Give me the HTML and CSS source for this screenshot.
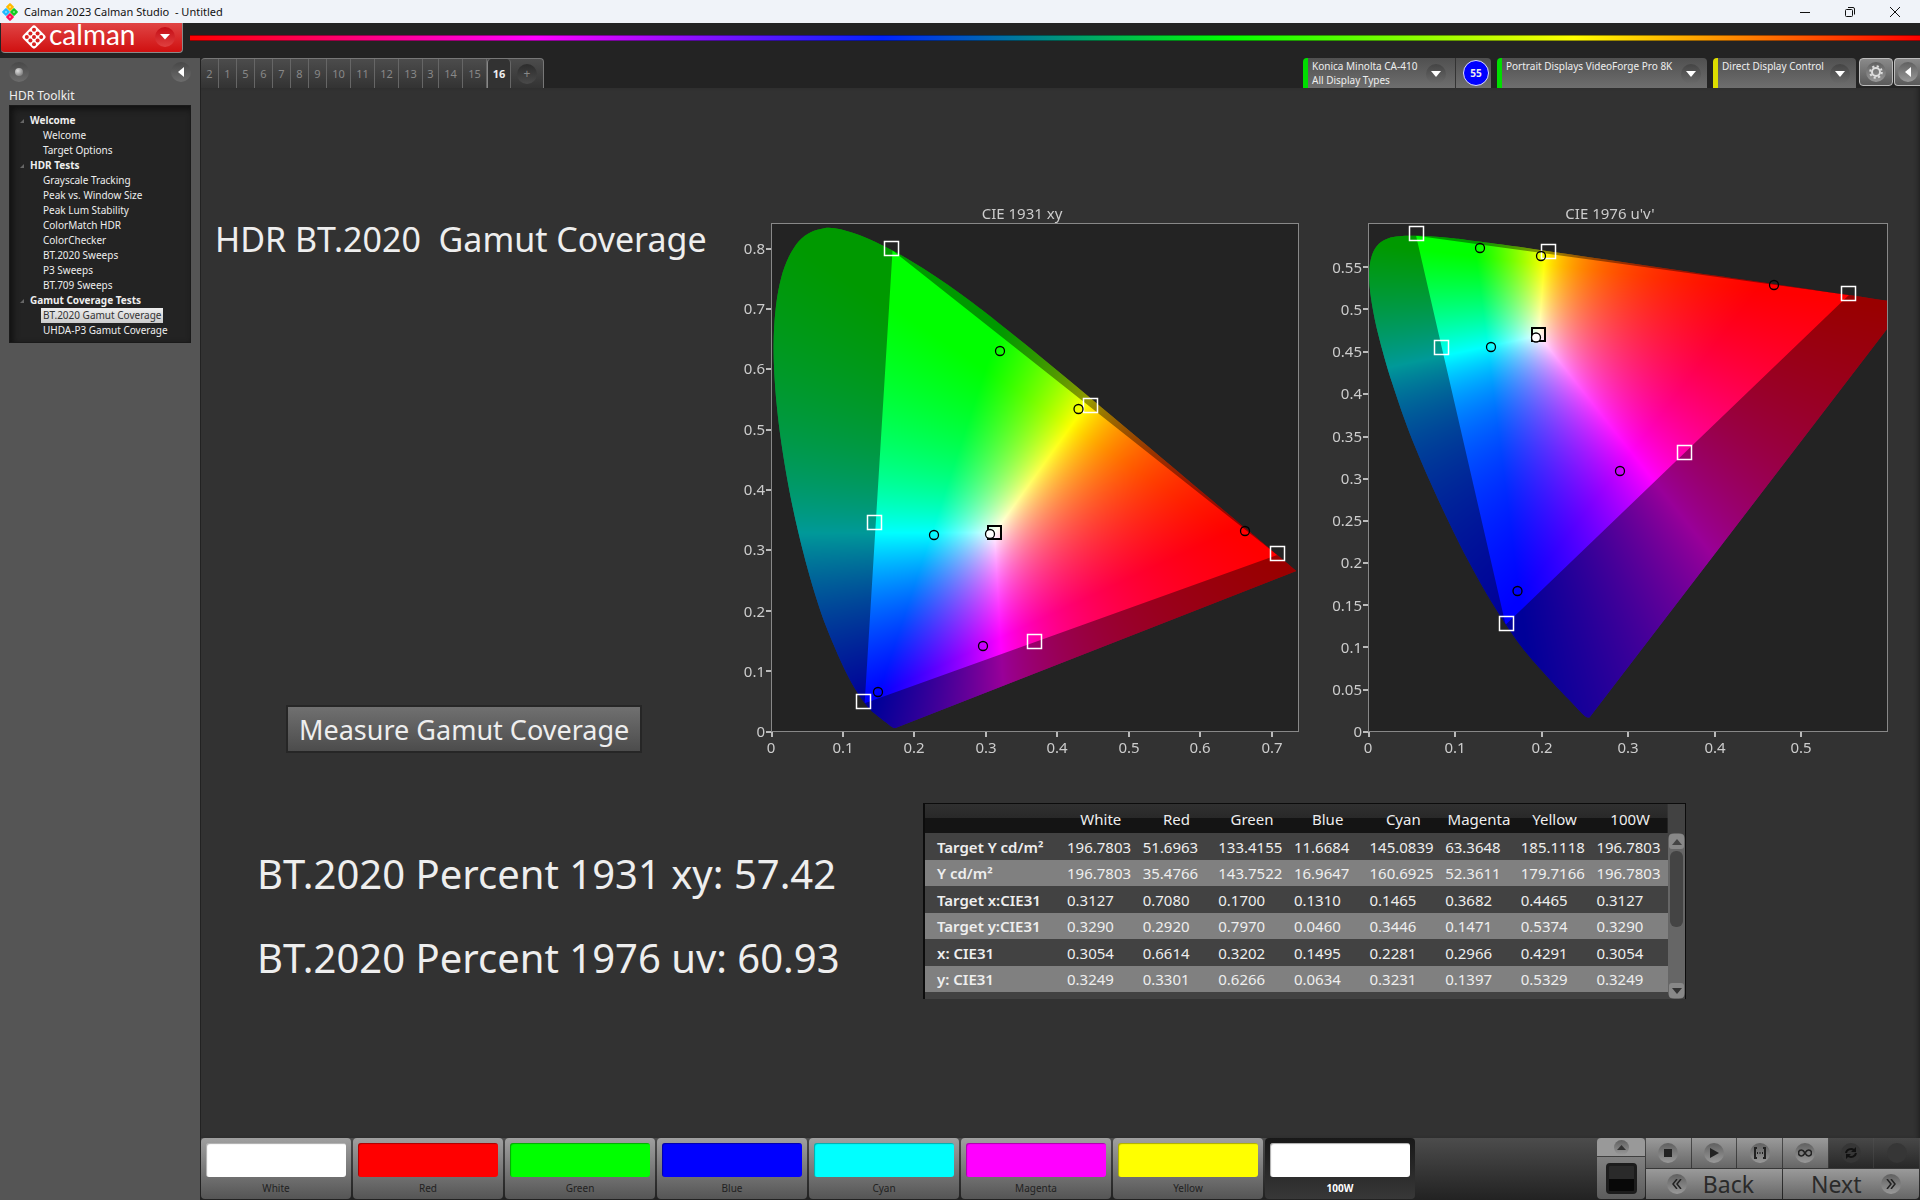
FILE: index.html
```html
<!DOCTYPE html>
<html lang="en">
<head>
<meta charset="utf-8">
<title>Calman 2023 Calman Studio - Untitled</title>
<link rel="stylesheet" href="styles.css">
</head>
<body>
<div class="app">
  <header class="titlebar">
    <svg class="app-icon" width="16" height="18" viewBox="0 0 16 18" aria-hidden="true">
      <rect x="5" y="1" width="6" height="6" rx="1" fill="#fb0" transform="rotate(45 8 4)"/>
      <rect x="1" y="6" width="6" height="6" rx="1" fill="#2bf" transform="rotate(45 4 9)"/>
      <rect x="9" y="6" width="6" height="6" rx="1" fill="#1c2" transform="rotate(45 12 9)"/>
      <rect x="5" y="11" width="6" height="6" rx="1" fill="#f15" transform="rotate(45 8 14)"/>
      <g fill="#fff" opacity=".5"><circle cx="8" cy="4" r="1"/><circle cx="4" cy="9" r="1"/><circle cx="12" cy="9" r="1"/><circle cx="8" cy="14" r="1"/></g>
    </svg>
    <h1 class="window-title">Calman 2023 Calman Studio &nbsp;- Untitled</h1>
    <div class="window-buttons">
      <button class="win-btn" aria-label="Minimize"><svg width="12" height="12" viewBox="0 0 12 12"><path d="M1 6.5h10" stroke="#111"/></svg></button>
      <button class="win-btn" aria-label="Restore"><svg width="12" height="12" viewBox="0 0 12 12" fill="none" stroke="#111"><rect x="1.500" y="3.500" width="7" height="7" rx="1"/><path d="M4 1.500h5q1.500 0 1.500 1.500v5.500"/></svg></button>
      <button class="win-btn" aria-label="Close"><svg width="12" height="12" viewBox="0 0 12 12"><path d="M1 1l10 10M11 1L1 11" stroke="#111"/></svg></button>
    </div>
  </header>

  <div class="brandbar">
    <button class="brand">
      <svg width="24" height="24" viewBox="0 0 24 24" aria-hidden="true">
        <rect x="3" y="3" width="18" height="18" rx="3" fill="#fff" transform="rotate(45 12 12)"/>
        <g fill="#d8201f"><circle cx="12" cy="4.800" r="2"/><circle cx="8.400" cy="8.400" r="2"/><circle cx="15.600" cy="8.400" r="2"/><circle cx="4.800" cy="12" r="2"/><circle cx="12" cy="12" r="2"/><circle cx="19.200" cy="12" r="2"/><circle cx="8.400" cy="15.600" r="2"/><circle cx="15.600" cy="15.600" r="2"/><circle cx="12" cy="19.200" r="2"/></g>
      </svg>
      <span class="brand-name">calman</span>
      <span class="brand-menu"><svg width="10" height="6" viewBox="0 0 10 6"><path d="M0 0h10L5 5.500z" fill="#fff"/></svg></span>
    </button>
    <div class="spectrum"></div>
  </div>

  <div class="body">
    <aside class="sidebar">
      <div class="side-tools">
        <button class="round-btn" aria-label="Record"><span class="led"></span></button>
        <button class="round-btn" aria-label="Collapse"><svg width="6" height="10" viewBox="0 0 6 10"><path d="M6 0v10L0 5z" fill="#fff"/></svg></button>
      </div>
      <h2 class="side-title">HDR Toolkit</h2>
      <nav class="tree">
        <h3>Welcome</h3>
        <a href="#">Welcome</a>
        <a href="#">Target Options</a>
        <h3>HDR Tests</h3>
        <a href="#">Grayscale Tracking</a>
        <a href="#">Peak vs. Window Size</a>
        <a href="#">Peak Lum Stability</a>
        <a href="#">ColorMatch HDR</a>
        <a href="#">ColorChecker</a>
        <a href="#">BT.2020 Sweeps</a>
        <a href="#">P3 Sweeps</a>
        <a href="#">BT.709 Sweeps</a>
        <h3>Gamut Coverage Tests</h3>
        <a href="#" class="current" aria-current="page">BT.2020 Gamut Coverage</a>
        <a href="#">UHDA-P3 Gamut Coverage</a>
      </nav>
    </aside>

    <main class="main">
      <div class="topstrip">
        <div class="tabs">
          <button>2</button><button>1</button><button>5</button><button>6</button><button>7</button><button>8</button><button>9</button><button class="wide">10</button><button class="wide">11</button><button class="wide">12</button><button class="wide">13</button><button class="narrow">3</button><button class="wide">14</button><button class="wide">15</button><button class="wide active">16</button><button class="add" aria-label="Add page"><span>+</span></button>
        </div>
        <div class="devices">
          <div class="device meter">
            <button class="device-pick"><span>Konica Minolta CA-410<br>All Display Types</span><i class="drop"><svg width="10" height="6" viewBox="0 0 10 6"><path d="M0 0h10L5 6z" fill="#fff"/></svg></i></button>
            <span class="badge">55</span>
          </div>
          <div class="device source">
            <button class="device-pick"><span>Portrait Displays VideoForge Pro 8K</span><i class="drop"><svg width="10" height="6" viewBox="0 0 10 6"><path d="M0 0h10L5 6z" fill="#fff"/></svg></i></button>
          </div>
          <div class="device display">
            <button class="device-pick"><span>Direct Display Control</span><i class="drop"><svg width="10" height="6" viewBox="0 0 10 6"><path d="M0 0h10L5 6z" fill="#fff"/></svg></i></button>
          </div>
          <button class="tool-btn" aria-label="Settings"><i class="disc"><svg width="14" height="14" viewBox="0 0 14 14" fill="none" stroke="#ddd"><circle cx="7" cy="7" r="4" stroke-width="2"/><circle cx="7" cy="7" r="5.800" stroke-width="2" stroke-dasharray="2.200 2.350"/></svg></i></button>
          <button class="tool-btn last" aria-label="Expand"><i class="disc"><svg width="6" height="10" viewBox="0 0 6 10"><path d="M6 0v10L0 5z" fill="#fff"/></svg></i></button>
        </div>
      </div>

      <div class="workspace">
        <section class="top-row">
          <div class="intro">
            <h2 class="page-title">HDR BT.2020&nbsp; Gamut Coverage</h2>
            <button class="measure">Measure Gamut Coverage</button>
          </div>
          <div class="charts">
            <figure class="chart">
              <canvas id="cie1931" width="570" height="560"></canvas>
              <svg viewBox="0 0 570 560" role="img" aria-label="CIE 1931 xy">
                <text class="title" x="282" y="19">CIE 1931 xy</text>
                <rect class="frame" x="31.500" y="23.500" width="527" height="508"/>
                <path class="ticks" d="M26 532h5M26 471h5M26 411h5M26 350h5M26 290h5M26 230h5M26 169h5M26 109h5M26 49h5M32 532v5M103 532v5M174 532v5M246 532v5M317 532v5M389 532v5M460 532v5M532 532v5"/>
                <g class="ylab"><text x="25" y="537">0</text><text x="25" y="477">0.1</text><text x="25" y="417">0.2</text><text x="25" y="355">0.3</text><text x="25" y="295">0.4</text><text x="25" y="235">0.5</text><text x="25" y="174">0.6</text><text x="25" y="114">0.7</text><text x="25" y="54">0.8</text></g>
                <g class="xlab"><text x="31" y="553">0</text><text x="103" y="553">0.1</text><text x="174" y="553">0.2</text><text x="246" y="553">0.3</text><text x="317" y="553">0.4</text><text x="389" y="553">0.5</text><text x="460" y="553">0.6</text><text x="532" y="553">0.7</text></g>
                <g class="targets">
                  <rect x="144.500" y="41.500" width="14" height="14"/><rect x="343.500" y="198.500" width="14" height="14"/><rect x="127.500" y="315.500" width="14" height="14"/><rect x="287.500" y="434.500" width="14" height="14"/><rect x="116.500" y="494.500" width="14" height="14"/><rect x="530.500" y="346.500" width="14" height="14"/>
                  <rect class="white-point" x="248" y="326" width="13" height="13"/>
                </g>
                <g class="readings">
                  <circle cx="260" cy="151" r="4.500"/><circle cx="338.500" cy="209" r="4.500"/><circle cx="194" cy="335" r="4.500"/><circle cx="505" cy="331" r="4.500"/><circle cx="243" cy="446" r="4.500"/><circle cx="138" cy="492" r="4.500"/><circle class="white-read" cx="250" cy="334" r="4.500"/>
                </g>
              </svg>
            </figure>
            <figure class="chart">
              <canvas id="cie1976" width="570" height="560"></canvas>
              <svg viewBox="0 0 570 560" role="img" aria-label="CIE 1976 u'v'">
                <text class="title" x="280" y="19">CIE 1976 u'v'</text>
                <rect class="frame" x="38.500" y="23.500" width="519" height="508"/>
                <path class="ticks" d="M33 532h5M33 490h5M33 447h5M33 405h5M33 363h5M33 321h5M33 279h5M33 237h5M33 194h5M33 152h5M33 109h5M33 67h5M39 532v5M125 532v5M212 532v5M298 532v5M385 532v5M471 532v5"/>
                <g class="ylab"><text x="32" y="537">0</text><text x="32" y="495">0.05</text><text x="32" y="453">0.1</text><text x="32" y="411">0.15</text><text x="32" y="368">0.2</text><text x="32" y="326">0.25</text><text x="32" y="284">0.3</text><text x="32" y="242">0.35</text><text x="32" y="199">0.4</text><text x="32" y="157">0.45</text><text x="32" y="115">0.5</text><text x="32" y="73">0.55</text></g>
                <g class="xlab"><text x="38" y="553">0</text><text x="125" y="553">0.1</text><text x="212" y="553">0.2</text><text x="298" y="553">0.3</text><text x="385" y="553">0.4</text><text x="471" y="553">0.5</text></g>
                <g class="targets">
                  <rect x="79.500" y="26.500" width="14" height="14"/><rect x="211.500" y="44.500" width="14" height="14"/><rect x="104.500" y="140.500" width="14" height="14"/><rect x="347.500" y="245.500" width="14" height="14"/><rect x="169.500" y="416.500" width="14" height="14"/><rect x="511.500" y="86.500" width="14" height="14"/>
                  <rect class="white-point" x="202" y="128" width="13" height="13"/>
                </g>
                <g class="readings">
                  <circle cx="150" cy="48" r="4.500"/><circle cx="211" cy="56" r="4.500"/><circle cx="161" cy="147" r="4.500"/><circle cx="444" cy="85" r="4.500"/><circle cx="290" cy="271" r="4.500"/><circle cx="187.500" cy="391" r="4.500"/><circle class="white-read" cx="206" cy="137.500" r="4.500"/>
                </g>
              </svg>
            </figure>
          </div>
        </section>

        <section class="bottom-row">
          <div class="results">
            <p>BT.2020 Percent 1931 xy: 57.42</p>
            <p>BT.2020 Percent 1976 uv: 60.93</p>
          </div>
          <div class="grid">
            <div class="grid-view">
              <table>
                <thead><tr><th class="name"></th><th>White</th><th>Red</th><th>Green</th><th>Blue</th><th>Cyan</th><th>Magenta</th><th>Yellow</th><th>100W</th></tr></thead>
                <tbody>
                  <tr><th>Target Y cd/m²</th><td>196.7803</td><td>51.6963</td><td>133.4155</td><td>11.6684</td><td>145.0839</td><td>63.3648</td><td>185.1118</td><td>196.7803</td></tr>
                  <tr><th>Y cd/m²</th><td>196.7803</td><td>35.4766</td><td>143.7522</td><td>16.9647</td><td>160.6925</td><td>52.3611</td><td>179.7166</td><td>196.7803</td></tr>
                  <tr><th>Target x:CIE31</th><td>0.3127</td><td>0.7080</td><td>0.1700</td><td>0.1310</td><td>0.1465</td><td>0.3682</td><td>0.4465</td><td>0.3127</td></tr>
                  <tr><th>Target y:CIE31</th><td>0.3290</td><td>0.2920</td><td>0.7970</td><td>0.0460</td><td>0.3446</td><td>0.1471</td><td>0.5374</td><td>0.3290</td></tr>
                  <tr><th>x: CIE31</th><td>0.3054</td><td>0.6614</td><td>0.3202</td><td>0.1495</td><td>0.2281</td><td>0.2966</td><td>0.4291</td><td>0.3054</td></tr>
                  <tr><th>y: CIE31</th><td>0.3249</td><td>0.3301</td><td>0.6266</td><td>0.0634</td><td>0.3231</td><td>0.1397</td><td>0.5329</td><td>0.3249</td></tr>
                </tbody>
              </table>
            </div>
            <div class="scrollbar">
              <button aria-label="Scroll up"><svg width="10" height="6" viewBox="0 0 10 6"><path d="M0 6h10L5 0z" fill="#444"/></svg></button>
              <div class="thumb"></div>
              <button aria-label="Scroll down"><svg width="10" height="6" viewBox="0 0 10 6"><path d="M0 0h10L5 6z" fill="#333"/></svg></button>
            </div>
          </div>
        </section>
      </div>

      <footer class="footer">
        <div class="swatches">
          <button><span class="chip white"></span>White</button>
          <button><span class="chip red"></span>Red</button>
          <button><span class="chip green"></span>Green</button>
          <button><span class="chip blue"></span>Blue</button>
          <button><span class="chip cyan"></span>Cyan</button>
          <button><span class="chip magenta"></span>Magenta</button>
          <button><span class="chip yellow"></span>Yellow</button>
          <button class="selected"><span class="chip white"></span>100W</button>
        </div>
        <div class="transport">
          <div class="pattern">
            <button class="up" aria-label="Show patterns"><i class="disc small"><svg width="9" height="5" viewBox="0 0 9 5"><path d="M0 5h9L4.500 0z" fill="#333"/></svg></i></button>
            <button class="screen" aria-label="Pattern window"><span></span></button>
          </div>
          <div class="controls">
            <button aria-label="Stop"><i class="disc"><svg width="8" height="8" viewBox="0 0 8 8"><path d="M0 0h8v8H0z" fill="#222"/></svg></i></button>
            <button aria-label="Play"><i class="disc"><svg width="10" height="10" viewBox="0 0 10 10"><path d="M1 0l9 5-9 5z" fill="#222"/></svg></i></button>
            <button aria-label="Read series"><i class="disc"><svg width="14" height="12" viewBox="0 0 14 12" fill="none" stroke="#222" stroke-width="2"><path d="M4 1H2v10h2M10 1h2v10h-2M4 6h1M6.500 6h1M9 6h1"/></svg></i></button>
            <button aria-label="Read continuous"><i class="disc"><svg width="14" height="8" viewBox="0 0 14 8" fill="none" stroke="#222" stroke-width="1.500"><path d="M7 4C5.500 1.500 4.500 1 3.500 1a3 3 0 0 0 0 6C4.500 7 5.500 6.500 7 4s2.500-3 3.500-3a3 3 0 0 1 0 6C9.500 7 8.500 6.500 7 4z"/></svg></i></button>
            <button class="off" aria-label="Refresh"><i class="disc"><svg width="12" height="12" viewBox="0 0 12 12" fill="none" stroke="#111" stroke-width="2"><path d="M1 6a5 4.500 0 0 1 8-3M11 6a5 4.500 0 0 1-8 3"/><path d="M11 0v5H6zM1 12V7h5z" fill="#111" stroke="none"/></svg></i></button>
            <button class="off" aria-label="Blank"><i class="disc"></i></button>
            <button class="nav"><i class="disc"><svg width="10" height="10" viewBox="0 0 10 10" fill="none" stroke="#222" stroke-width="1.500"><path d="M5 0L1 5l4 5M9 0L5 5l4 5"/></svg></i>Back</button>
            <button class="nav next">Next<i class="disc"><svg width="10" height="10" viewBox="0 0 10 10" fill="none" stroke="#222" stroke-width="1.500"><path d="M1 0l4 5-4 5M5 0l4 5-4 5"/></svg></i></button>
          </div>
        </div>
      </footer>
    </main>
  </div>
</div>
<script src="gamut.js"></script>
</body>
</html>
```
FILE: styles.css
```css
* { box-sizing: border-box; }

body {
  margin: 0;
  background: #232323;
  color: #eee;
  font-family: "Noto Sans", "Open Sans", sans-serif;
  font-size: 10px;
}

h1, h2, h3, p, figure { margin: 0; font-weight: 400; }

button {
  margin: 0;
  padding: 0;
  border: 0;
  background: none;
  color: inherit;
  font: inherit;
}

svg { display: block; }

.app {
  display: flex;
  flex-direction: column;
  min-height: 100vh;
}

/* Window frame */
.titlebar {
  display: flex;
  align-items: center;
  height: 23px;
  padding: 0 3px 0 2px;
  background: #f0f3f9;
  color: #111;
}
.window-title {
  flex: 1;
  margin-left: 6px;
  font-size: 11px;
}
.window-buttons { display: flex; height: 20px; }
.win-btn { display: grid; place-items: center; width: 45px; }

.brandbar {
  display: flex;
  align-items: flex-start;
  gap: 7px;
  height: 35px;
  padding-left: 1px;
}
.brand {
  display: flex;
  align-items: center;
  width: 182px;
  height: 30px;
  padding: 0 7px 2px 21px;
  border: solid #8a8a8a;
  border-width: 0 1px 1px 0;
  border-radius: 0 0 4px 4px;
  background: linear-gradient(#e04545, #d01010);
  color: #fff;
}
.brand-name {
  flex: 1;
  height: 28px;
  padding-left: 3px;
  font: 28px/22px "Lato", sans-serif;
  text-align: left;
}
.brand-menu {
  display: grid;
  place-items: center;
  width: 20px;
  height: 20px;
  border-radius: 50%;
  background: linear-gradient(#c40c14, #e04040);
}
.spectrum {
  flex: 1;
  height: 6px;
  margin-top: 12px;
  border: solid #0006;
  border-width: 1px 0;
  background: linear-gradient(90deg, #f00, #f0f, #02f, #0f0, #ff0, #f00);
  background-origin: border-box;
}

.body { display: flex; flex: 1; }

/* Sidebar */
.sidebar {
  flex: none;
  width: 200px;
  background: #555;
}
.side-tools {
  display: flex;
  justify-content: space-between;
  padding: 4px 9px 0;
}
.round-btn {
  display: grid;
  place-items: center;
  width: 20px;
  height: 20px;
  border-radius: 50%;
  background: linear-gradient(#484848, #6c6c6c);
}
.led {
  width: 8px;
  height: 8px;
  border-radius: 50%;
  background: radial-gradient(circle at 35% 35%, #ddd, #888 70%);
}
.side-title {
  padding: 6px 9px 0;
  font-size: 12px;
  line-height: 16px;
}
.tree {
  margin: 1px 9px 0;
  height: 238px;
  padding: 7px 0 0 20px;
  border: 1px solid #1a1a1a;
  background: #232323;
  box-shadow: inset 3px 3px 6px #111;
  line-height: 15px;
}
.tree h3 {
  position: relative;
  font-size: 10px;
  font-weight: 700;
}
.tree h3::before {
  content: "";
  position: absolute;
  left: -10px;
  top: 6px;
  border: solid transparent;
  border-width: 0 0 4px 4px;
  border-bottom-color: #666;
}
.tree a {
  display: block;
  width: max-content;
  margin-left: 11px;
  padding: 0 2px;
  color: #eee;
  text-decoration: none;
}
.tree .current {
  background: linear-gradient(#eee, #ccc);
  color: #333;
}

/* Tab strip and devices */
.main {
  display: flex;
  flex: 1;
  flex-direction: column;
  min-width: 0;
  border-left: 1px solid #222;
  background: #323232;
}
.topstrip {
  display: flex;
  justify-content: space-between;
  height: 30px;
  background: #232323;
}
.tabs {
  display: flex;
  border: solid #777;
  border-width: 1px 1px 0 0;
  border-radius: 4px 4px 0 0;
  background: linear-gradient(#4c4c4c, #333);
  color: #888;
  font-size: 11px;
}
.tabs button {
  width: 18px;
  border-right: 1px solid #666;
}
.tabs .wide { width: 24px; }
.tabs .narrow { width: 16px; }
.tabs .active {
  border-left: 1px solid #888;
  border-radius: 4px 4px 0 0;
  background: #323232;
  color: #eee;
  font-weight: 700;
}
.tabs .add { display: grid; place-items: center; width: 32px; border: 0; }
.tabs .add span {
  width: 20px;
  height: 20px;
  border-radius: 50%;
  background: linear-gradient(#2c2c2c, #4a4a4a);
  font-size: 12px;
  line-height: 20px;
}

.devices { display: flex; align-items: flex-start; }
.device {
  display: flex;
  height: 30px;
  margin-right: 6px;
  border-left: 5px solid #0d0;
  border-radius: 4px 4px 0 0;
  background: linear-gradient(#505050, #6e6e6e);
}
.meter { width: 188px; }
.source { width: 210px; }
.display { width: 143px; margin-right: 3px; border-color: #dd0; }
.device-pick {
  display: flex;
  flex: 1;
  justify-content: space-between;
  padding: 1px 6px 0 4px;
  line-height: 14px;
  text-align: left;
  white-space: nowrap;
}
.meter .device-pick { padding-right: 9px; border-right: 1px solid #333; }
.drop {
  display: grid;
  place-items: center;
  width: 20px;
  height: 20px;
  margin-top: 5px;
  border-radius: 50%;
  background: linear-gradient(#444, #6a6a6a);
}
.badge {
  width: 26px;
  height: 26px;
  margin: 2px 2px 0 7px;
  border: 1px solid #ddf;
  border-radius: 50%;
  background: #00f;
  font-weight: 700;
  line-height: 24px;
  text-align: center;
}
.tool-btn {
  display: grid;
  place-items: center;
  width: 34px;
  height: 28px;
  margin-right: 1px;
  border: 1px solid #bbb;
  border-radius: 4px;
  background: linear-gradient(#8a8a8a, #5a5a5a);
}
.tool-btn.last {
  width: 26px;
  margin-right: 0;
  border-right: 0;
  border-radius: 4px 0 0 4px;
}
.disc {
  display: grid;
  place-items: center;
  width: 20px;
  height: 20px;
  border-radius: 50%;
  background: linear-gradient(#606060, #999);
}

/* Workspace */
.workspace {
  flex: 1;
  padding: 112px 20px 0 0;
  box-shadow: inset -4px 0 4px -2px #222;
}
.top-row { display: flex; }
.intro {
  display: flex;
  flex: none;
  flex-direction: column;
  align-items: flex-start;
  justify-content: space-between;
  width: 539px;
  padding: 15px 0 7px 14px;
}
.page-title {
  font-size: 34px;
  line-height: 48px;
}
.measure {
  height: 48px;
  margin-left: 71px;
  padding: 2px 11px 0;
  border: 2px solid #262626;
  background: linear-gradient(#707070, #4c4c4c);
  font-size: 27px;
  line-height: 40px;
}
.charts {
  display: grid;
  flex: 1;
  grid-template-columns: 1fr 1fr;
  gap: 20px;
}
.chart { display: grid; }
.chart canvas, .chart svg {
  grid-area: 1 / 1;
  width: 100%;
}
.chart text {
  fill: #ccc;
  font-size: 15px;
}
.title, .xlab { text-anchor: middle; }
.ylab { text-anchor: end; }
.frame { fill: none; stroke: #888; }
.ticks { stroke: #bbb; stroke-width: 2; }
.targets { fill: none; stroke: #fff; stroke-width: 1.5; }
.white-point { stroke: #000; stroke-width: 2; }
.readings { fill: none; stroke: #000; stroke-width: 1.3; }
.white-read { fill: #fff; }

.bottom-row { display: flex; padding-top: 43px; }
.results {
  display: flex;
  flex: none;
  flex-direction: column;
  gap: 28px;
  width: 722px;
  padding: 43px 0 0 56px;
}
.results p {
  font-size: 40px;
  line-height: 56px;
}
.grid {
  display: flex;
  width: 763px;
  height: 196px;
  overflow: hidden;
  border: solid #0c0c0c;
  border-width: 1px 1px 0 2px;
  background: #424242;
}
.grid-view { flex: 1; }
table {
  width: 100%;
  border-collapse: collapse;
  table-layout: fixed;
  font-size: 15px;
  line-height: 20px;
}
th, td { padding: 0; text-align: left; }
thead tr {
  height: 29px;
  background: linear-gradient(#303030, #282828 50%, #141414 50%, #141414);
}
thead th { font-weight: 400; text-align: center; }
thead .name { width: 138px; }
tbody tr { height: 27px; }
tbody tr:nth-child(even) { height: 26px; background: #808080; }
tbody th { padding-left: 12px; font-weight: 600; }
tbody td { padding-left: 4px; }
.scrollbar {
  display: flex;
  flex: none;
  flex-direction: column;
  width: 17px;
  margin-top: 29px;
  border-radius: 6px;
  background: #666;
}
.scrollbar button {
  display: grid;
  place-items: center;
  width: 15px;
  height: 15px;
  margin: 1px;
  border-radius: 3px;
  background: #888;
}
.scrollbar button:last-child { margin-top: auto; }
.thumb {
  width: 13px;
  height: 76px;
  margin: 1px 2px;
  border-radius: 6px;
  background: #444;
}

/* Footer */
.footer {
  display: flex;
  justify-content: space-between;
  height: 62px;
  background: linear-gradient(#4c4c4c, #222);
}
.swatches { display: flex; gap: 2px; }
.swatches button {
  display: flex;
  flex-direction: column;
  align-items: center;
  width: 150px;
  height: 61px;
  padding-top: 5px;
  border-radius: 4px;
  background: linear-gradient(#a0a0a0, #555);
  color: #222;
  line-height: 22px;
}
.swatches .selected {
  background: linear-gradient(#181818, #383838);
  color: #fff;
  font-weight: 700;
}
.chip {
  width: 140px;
  height: 36px;
  border-radius: 3px;
  box-shadow: inset 1px 1px 1px #0005;
}
.white { background: #fff; }
.red { background: #f00; }
.green { background: #0f0; }
.blue { background: #00f; }
.cyan { background: #0ff; }
.magenta { background: #f0f; }
.yellow { background: #ff0; }

.transport { display: flex; gap: 1px; padding-right: 1px; height: 61px; }
.pattern { display: flex; flex-direction: column; gap: 1px; width: 48px; }
.pattern button {
  display: grid;
  place-items: center;
  flex: 1;
  border-radius: 0 0 4px 4px;
  background: linear-gradient(#808080, #5c5c5c);
}
.pattern .up {
  flex: none;
  height: 18px;
  border-radius: 4px 4px 0 0;
  background: #999;
}
.small { width: 15px; height: 15px; }
.screen span {
  width: 31px;
  height: 31px;
  border: 3px solid #1c1c1c;
  border-radius: 4px;
  background: linear-gradient(#2a2a2a 50%, #080808 50%);
}
.controls {
  display: grid;
  grid-template-columns: repeat(6, 1fr);
  grid-template-rows: 30px 30px;
  gap: 1px;
  width: 273px;
}
.controls button {
  display: grid;
  place-items: center;
  background: linear-gradient(#9a9a9a, #666);
}
.controls .off { background: linear-gradient(#484848, #282828); }
.off .disc { background: #363636; }
.controls .nav {
  display: flex;
  grid-column: span 3;
  align-items: center;
  justify-content: space-between;
  padding: 0 28px 0 21px;
  color: #2a2a2a;
  font-size: 23px;
  line-height: 30px;
}
.controls .next { padding: 0 18px 0 28px; border-radius: 0 0 4px 0; }
```
FILE: gamut.js
```javascript
// CIE 1931 2-degree spectral locus as x, y pairs, 380 nm to 700 nm.
const LOCUS = [
  [.1741, .0050], [.1733, .0048], [.1714, .0051], [.1689, .0069], [.1644, .0109], [.1566, .0177],
  [.1440, .0297], [.1355, .0399], [.1241, .0578], [.1096, .0868], [.0913, .1327], [.0687, .2007],
  [.0454, .2950], [.0235, .4127], [.0082, .5384], [.0039, .6548], [.0139, .7502], [.0389, .8120],
  [.0743, .8338], [.1142, .8262], [.1547, .8059], [.1929, .7816], [.2296, .7543], [.2658, .7243],
  [.3016, .6923], [.3731, .6245], [.4441, .5547], [.5125, .4866], [.5752, .4242], [.6270, .3725],
  [.6658, .3340], [.6915, .3083], [.7190, .2809], [.7347, .2653]
];
const BT2020 = [[.708, .292], [.170, .797], [.131, .046]];

const toUv = ([x, y]) => {
  const d = -2 * x + 12 * y + 3;
  return [4 * x / d, 9 * y / d];
};
const fromUv = ([u, v]) => {
  const d = 6 * u - 16 * v + 12;
  return [9 * u / d, 4 * v / d];
};
const same = p => p;

function paint(id, plot, project, unproject) {
  const canvas = document.getElementById(id);
  const ctx = canvas.getContext("2d");
  const place = p => {
    const [a, b] = project(p);
    return [plot.x + a * plot.sx, plot.y + plot.h - b * plot.sy];
  };

  ctx.fillStyle = "#232323";
  ctx.fillRect(plot.x, plot.y, plot.w, plot.h);
  ctx.beginPath();
  ctx.rect(plot.x, plot.y, plot.w, plot.h);
  ctx.clip();

  // Chromaticity colours: linear RGB, clipped to positive and scaled to full.
  const layer = document.createElement("canvas");
  layer.width = canvas.width;
  layer.height = canvas.height;
  const lctx = layer.getContext("2d");
  const image = lctx.createImageData(layer.width, layer.height);
  for (let j = 0; j < layer.height; j++) {
    for (let i = 0; i < layer.width; i++) {
      const [x, y] = unproject([(i + .5 - plot.x) / plot.sx, (plot.y + plot.h - j - .5) / plot.sy]);
      const z = 1 - x - y;
      const rgb = [
        3.2406 * x - 1.5372 * y - .4986 * z,
        -.9689 * x + 1.8758 * y + .0415 * z,
        .0557 * x - .2040 * y + 1.0570 * z
      ].map(c => Math.max(c, 0));
      const top = Math.max(...rgb) || 1;
      const at = (j * layer.width + i) * 4;
      rgb.forEach((c, k) => { image.data[at + k] = 255 * c / top; });
      image.data[at + 3] = 255;
    }
  }
  lctx.putImageData(image, 0, 0);

  // Smooth outline through the locus points, closed by the line of purples.
  const pts = LOCUS.map(place);
  const outline = new Path2D();
  outline.moveTo(...pts[0]);
  for (let k = 0; k < pts.length - 1; k++) {
    const a = pts[Math.max(k - 1, 0)], b = pts[k], c = pts[k + 1], d = pts[Math.min(k + 2, pts.length - 1)];
    outline.bezierCurveTo(
      b[0] + (c[0] - a[0]) / 6, b[1] + (c[1] - a[1]) / 6,
      c[0] - (d[0] - b[0]) / 6, c[1] - (d[1] - b[1]) / 6,
      c[0], c[1]
    );
  }
  outline.closePath();
  ctx.clip(outline);
  ctx.drawImage(layer, 0, 0);

  // Darken everything outside the BT.2020 triangle.
  const shade = new Path2D();
  shade.rect(plot.x, plot.y, plot.w, plot.h);
  BT2020.map(place).forEach((p, k) => k ? shade.lineTo(...p) : shade.moveTo(...p));
  shade.closePath();
  ctx.fillStyle = "rgba(0, 0, 0, .4)";
  ctx.fill(shade, "evenodd");
}

paint("cie1931", { x: 31, y: 23, w: 528, h: 508, sx: 715, sy: 603 }, same, same);
paint("cie1976", { x: 38, y: 23, w: 520, h: 508, sx: 864, sy: 844 }, toUv, fromUv);
```
